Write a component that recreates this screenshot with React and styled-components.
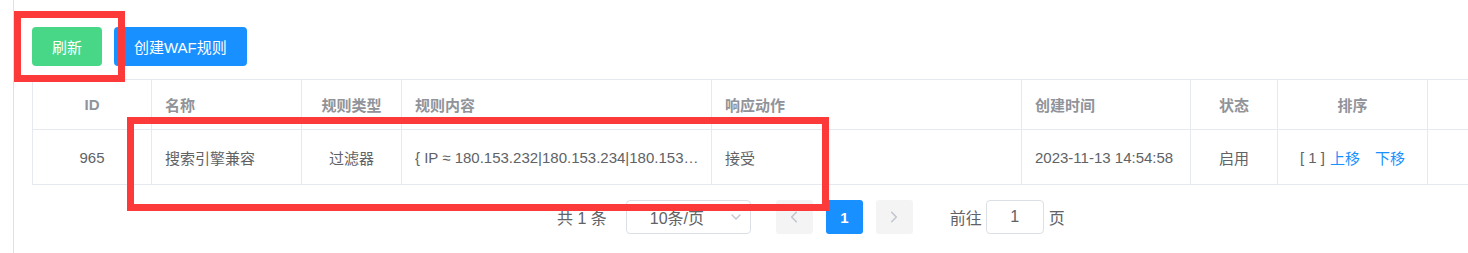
import React from "react";
import styled, { createGlobalStyle } from "styled-components";

const Global = createGlobalStyle`
  html, body { margin: 0; padding: 0; background: #fff; overflow: hidden; }
  body { font-family: "Liberation Sans", "Noto Sans CJK SC", sans-serif; }
`;

const Page = styled.div`
  position: relative;
  display: flex;
  width: 1468px;
  height: 253px;
  overflow: hidden;
  background: #fff;
`;

const Sidebar = styled.div`
  flex: none;
  width: 13px;
  border-right: 1px solid #e0e0e0;
`;

const Main = styled.div`
  flex: 1;
  min-width: 0;
  overflow: hidden;
  padding: 27px 0 0 18px;
`;

const Toolbar = styled.div`
  display: flex;
  gap: 12px;
  margin-bottom: 13px;
`;

const Button = styled.button`
  height: 39px;
  padding: 0 20px;
  border: none;
  border-radius: 4px;
  background: ${(p) => (p.$variant === "success" ? "#47d787" : "#1890ff")};
  color: #fff;
  font-family: inherit;
  font-size: 15px;
  cursor: pointer;
`;

const cols = [119, 150, 100, 310, 310, 169, 87, 150, 150];

const Grid = styled.div`
  display: grid;
  grid-template-columns: ${cols.map((c) => c + "px").join(" ")};
  width: max-content;
  border-top: 1px solid #e6e9ef;
  border-left: 1px solid #e6e9ef;
`;

const Cell = styled.div`
  box-sizing: border-box;
  height: ${(p) => (p.$head ? 50 : 55)}px;
  padding: 0 ${(p) => p.$pr ?? 13}px 0 13px;
  border-right: 1px solid #e6e9ef;
  border-bottom: 1px solid #e6e9ef;
  display: flex;
  align-items: center;
  justify-content: ${(p) => (p.$center ? "center" : "flex-start")};
  font-size: 15px;
  font-weight: ${(p) => (p.$head ? 700 : 400)};
  color: ${(p) => (p.$head ? "#909399" : "#606266")};
  white-space: nowrap;
  overflow: hidden;
`;

const Ellipsis = styled.span`
  display: block;
  overflow: hidden;
  text-overflow: ellipsis;
  white-space: nowrap;
  width: 100%;
`;

const Link = styled.span`
  color: #1890ff;
  margin-left: ${(p) => p.$gap}px;
  cursor: pointer;
`;

const Pager = styled.div`
  display: flex;
  align-items: center;
  height: 34px;
  margin-top: 15px;
  margin-left: 525px;
  font-size: 16px;
  color: #606266;
`;

const Total = styled.span`
  margin-right: 19px;
  white-space: nowrap;
`;

const Select = styled.div`
  box-sizing: border-box;
  width: 125px;
  height: 34px;
  border: 1px solid #dcdfe6;
  border-radius: 4px;
  display: flex;
  align-items: center;
  justify-content: space-between;
  padding: 0 8px 0 23px;
  margin-right: 25px;
  color: #606266;
`;

const PageBtn = styled.div`
  width: 37px;
  height: 34px;
  border-radius: 3px;
  display: flex;
  align-items: center;
  justify-content: center;
  margin-right: 13px;
  background: ${(p) => (p.$active ? "#1890ff" : "#f4f4f5")};
  color: ${(p) => (p.$active ? "#fff" : "#c0c4cc")};
  font-weight: 700;
  font-size: 15px;
`;

const Jumper = styled.div`
  display: flex;
  align-items: center;
  margin-left: 24px;
  white-space: nowrap;
`;

const JumpInput = styled.div`
  box-sizing: border-box;
  width: 58px;
  height: 34px;
  margin: 0 5px 0 4px;
  border: 1px solid #dcdfe6;
  border-radius: 4px;
  display: flex;
  align-items: center;
  justify-content: center;
  color: #606266;
`;

const Annotation = styled.div`
  position: absolute;
  box-sizing: border-box;
  border: 7px solid #fc3a3a;
  pointer-events: none;
`;

const Chevron = ({ dir, size = 12, color = "#c0c4cc" }) => {
  const pts =
    dir === "left"
      ? "8,2 4,6 8,10"
      : dir === "right"
      ? "4,2 8,6 4,10"
      : "2,4 6,8 10,4";
  return (
    <svg width={size} height={size} viewBox="0 0 12 12" fill="none">
      <polyline points={pts} stroke={color} strokeWidth="1.3" strokeLinecap="round" strokeLinejoin="round" />
    </svg>
  );
};

const headers = [
  { t: "ID", c: true },
  { t: "名称" },
  { t: "规则类型", c: true },
  { t: "规则内容" },
  { t: "响应动作" },
  { t: "创建时间" },
  { t: "状态", c: true },
  { t: "排序", c: true },
  { t: "" },
];

export default function App() {
  return (
    <>
      <Global />
      <Page>
        <Sidebar />
        <Main>
          <Toolbar>
            <Button $variant="success">刷新</Button>
            <Button>创建WAF规则</Button>
          </Toolbar>
          <Grid>
            {headers.map((h, i) => (
              <Cell key={i} $head $center={h.c}>
                {h.t}
              </Cell>
            ))}
            <Cell $center>965</Cell>
            <Cell>搜索引擎兼容</Cell>
            <Cell $center>过滤器</Cell>
            <Cell $pr={9}>
              <Ellipsis>{"{ IP ≈ 180.153.232|180.153.234|180.153.236|180.153.238 }"}</Ellipsis>
            </Cell>
            <Cell>接受</Cell>
            <Cell>2023-11-13 14:54:58</Cell>
            <Cell $center>启用</Cell>
            <Cell $center>
              [ 1 ]<Link $gap={5}>上移</Link>
              <Link $gap={15}>下移</Link>
            </Cell>
            <Cell />
          </Grid>
          <Pager>
            <Total>共 1 条</Total>
            <Select>
              <span>10条/页</span>
              <Chevron dir="down" />
            </Select>
            <PageBtn>
              <Chevron dir="left" size={14} />
            </PageBtn>
            <PageBtn $active>1</PageBtn>
            <PageBtn>
              <Chevron dir="right" size={14} />
            </PageBtn>
            <Jumper>
              前往
              <JumpInput>1</JumpInput>
              页
            </Jumper>
          </Pager>
        </Main>
        <Annotation style={{ left: 14, top: 11, width: 111, height: 71 }} />
        <Annotation style={{ left: 127, top: 117, width: 702, height: 94 }} />
      </Page>
    </>
  );
}
